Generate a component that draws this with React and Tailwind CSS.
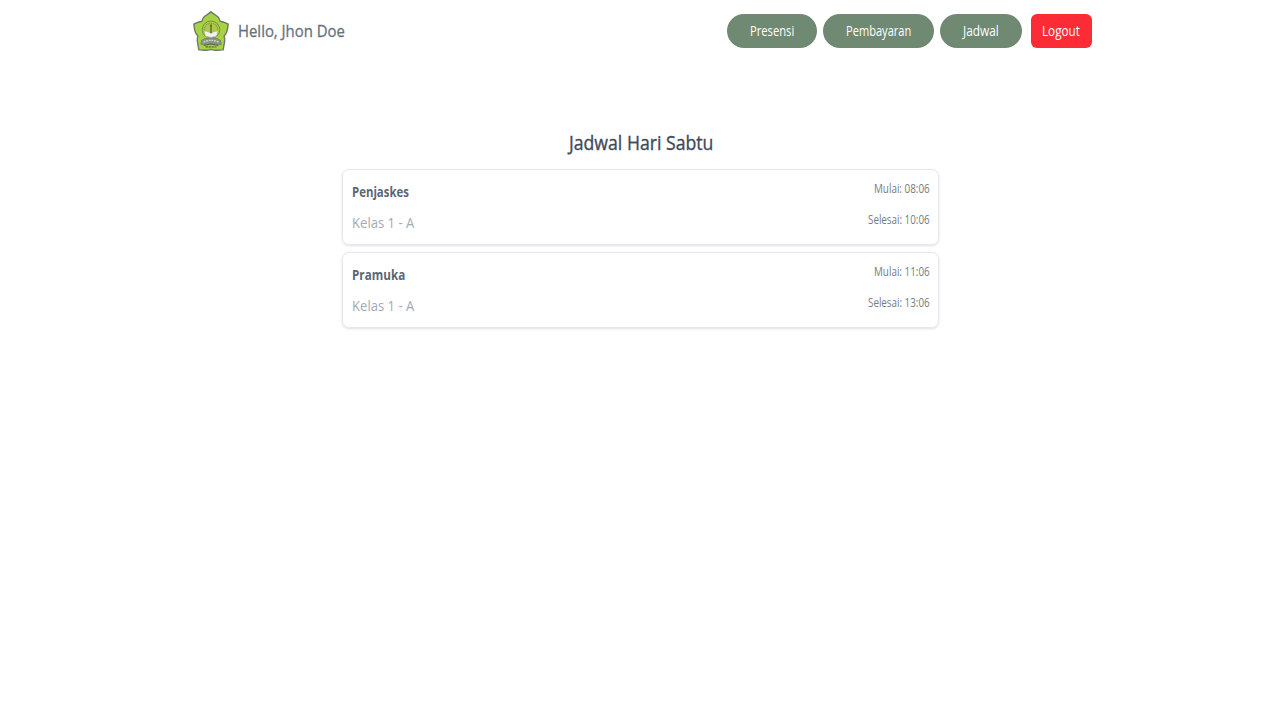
import { useLayoutEffect, useRef, useState } from "react";

// Condenses a line of text so that it fills the width of its box.
function Fit({ className, children }) {
  const box = useRef(null);
  const text = useRef(null);
  const [scale, setScale] = useState(1);
  useLayoutEffect(() => {
    setScale(box.current.clientWidth / text.current.offsetWidth);
  }, [children]);
  return (
    <span ref={box} className={`block whitespace-nowrap ${className}`}>
      <span
        ref={text}
        className="inline-block origin-left"
        style={{ transform: `scaleX(${scale})` }}
      >
        {children}
      </span>
    </span>
  );
}

function Logo() {
  return (
    <svg className="h-[40px] w-[36px] shrink-0" viewBox="0 0 36 40" fill="none">
      <path
        d="M18 .8C20 2.8 22.8 3.8 24.8 5.8C26 7 26.7 8.4 27 10.2C30 10.4 32.5 11.8 35.2 13.1C34.7 16 34.7 18.8 33.6 21.3C33 22.8 32.2 24 31 25C32.2 28 31.8 30.4 31.2 33C30.6 35 30.6 37 30.2 38.9C27.2 38.8 24.8 39.6 22 39.2C20.4 39 19.1 38.9 18 38.3C16.9 38.9 15.6 39 14 39.2C11.2 39.6 8.8 38.8 5.8 38.9C5.4 37 5.4 35 4.8 33C4.2 30.4 3.8 28 5 25C3.8 24 3 22.8 2.4 21.3C1.3 18.8 1.3 16 .8 13.1C3.5 11.8 6 10.4 9 10.2C9.3 8.4 10 7 11.2 5.8C13.2 3.8 16 2.8 18 .8Z"
        fill="#a6d344"
        stroke="#6f786a"
        strokeWidth="1.4"
        strokeLinejoin="round"
      />
      <circle cx="18" cy="18.8" r="8.8" fill="#aacb48" stroke="#6b8435" strokeWidth=".8" />
      <path d="M11.2 19A6.8 6.8 0 0 1 24.8 19" stroke="#7f963f" strokeWidth="1.1" strokeDasharray="1 .8" />
      <path d="M18 22V15.2" stroke="#5a602f" strokeWidth="1.3" />
      <path d="M18 12.4L19.2 15.6H16.8Z" fill="#7a4a22" />
      <path
        d="M18 22.8C16.5 20.8 14 19.9 11.2 20.2L12.6 25.5C15 25.2 16.8 25.8 18 27C19.2 25.8 21 25.2 23.4 25.5L24.8 20.2C22 19.9 19.5 20.8 18 22.8Z"
        fill="#f1f2f0"
        stroke="#98a090"
        strokeWidth=".4"
      />
      <path d="M8.6 29.2L12 27.6Q18 26.2 24 27.6L27.4 29.2L28.2 33.2L25 34.2Q18 31.6 11 34.2L7.8 33.2Z" fill="#8b9485" stroke="#67725f" strokeWidth=".6" />
      <path d="M10.5 31Q18 27.6 25.5 31" stroke="#d4d8d0" strokeWidth="1.3" strokeDasharray="1.8 .9" />
      <path d="M11 34.3Q18 31.8 25 34.3" stroke="#55643f" strokeWidth="1" />
      <path d="M12.5 35.9H23.5" stroke="#5b7427" strokeWidth="1.2" strokeDasharray="2.5 .5" />
    </svg>
  );
}

const links = [
  { label: "Presensi", box: "w-[90px]", text: "w-[44px]" },
  { label: "Pembayaran", box: "w-[111.5px]", text: "w-[65px]" },
  { label: "Jadwal", box: "w-[82px]", text: "w-[36px]" },
];

const lessons = [
  { name: "Penjaskes", width: "w-[57px]", start: "08:06", end: "10:06" },
  { name: "Pramuka", width: "w-[53px]", start: "11:06", end: "13:06" },
];

export default function App() {
  return (
    <div className="min-h-screen bg-white font-['Open_Sans','Noto_Sans',sans-serif]">
      <header className="flex h-[61px] items-center justify-between pl-[193px] pr-[188.5px]">
        <div className="flex items-center gap-[9px]">
          <Logo />
          <Fit className="w-[107px] text-[17px] text-[#687180] [-webkit-text-stroke:0.3px_#687180]">
            Hello, Jhon Doe
          </Fit>
        </div>
        <nav className="flex items-center gap-[5.8px] text-[14.5px] text-white">
          {links.map((link) => (
            <button
              key={link.label}
              className={`flex h-[34px] items-center justify-center rounded-full bg-[#6f8972] ${link.box}`}
            >
              <Fit className={link.text}>{link.label}</Fit>
            </button>
          ))}
          <button className="ml-[2.8px] flex h-[34px] w-[61px] items-center justify-center rounded-md bg-[#fb2c36]">
            <Fit className="w-[38px]">Logout</Fit>
          </button>
        </nav>
      </header>
      <main className="flex flex-col items-center pl-px pt-[68px]">
        <h1 className="mb-[12px] text-[19.5px] leading-7 text-[#414858] [-webkit-text-stroke:0.35px_#414858]">
          <Fit className="w-[144px]">Jadwal Hari Sabtu</Fit>
        </h1>
        <ul className="flex w-[597px] flex-col gap-[7px]">
          {lessons.map((lesson) => (
            <li
              key={lesson.name}
              className="flex h-[76px] justify-between rounded-[7px] border border-gray-200 px-[8px] shadow-sm"
            >
              <div className="flex flex-col gap-[7px] pl-[0.5px] pt-[9px] text-[15px] leading-6">
                <Fit className={`font-bold text-[#5c6575] ${lesson.width}`}>{lesson.name}</Fit>
                <Fit className="w-[62px] text-[#a3aab5]">Kelas 1 - A</Fit>
              </div>
              <div className="flex flex-col items-end gap-[11px] pt-[9px] text-[12.5px] leading-5 text-[#737b89]">
                <Fit className="w-[56px]">{`Mulai: ${lesson.start}`}</Fit>
                <Fit className="w-[62px]">{`Selesai: ${lesson.end}`}</Fit>
              </div>
            </li>
          ))}
        </ul>
      </main>
    </div>
  );
}
